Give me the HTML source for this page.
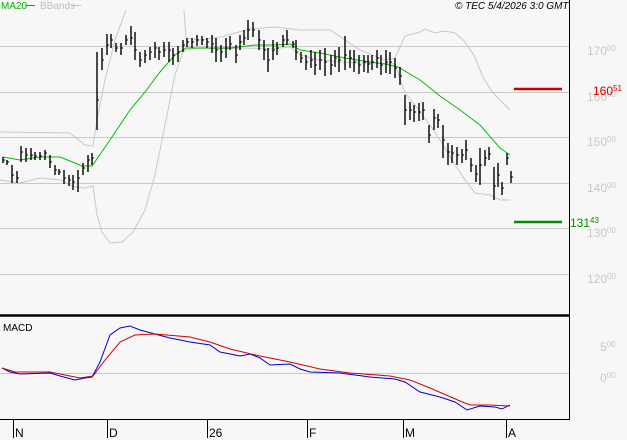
<!DOCTYPE html><html><head><style>
html,body{margin:0;padding:0;background:#f7f7f7;}
svg{display:block;font-family:"Liberation Sans",sans-serif;}
</style></head><body>
<svg width="627" height="440" viewBox="0 0 627 440">
<rect width="627" height="440" fill="#f7f7f7"/>
<g stroke="#c8c8c8" stroke-width="1">
<path d="M0 46.5H569M0 92.5H569M0 137.5H569M0 183.5H569M0 228.5H569M0 274.5H569M0 373.5H569"/>
</g>
<g fill="none" stroke="#c8c8c8" stroke-width="1">
<polyline points="0,132 70,133 85,145 93,146 97,120 105,80 115,40 126,10"/>
<polyline points="184,10 186,38 200,40 220,37 250,29 275,27 300,30 330,30 345,40 360,50 385,60 395,58 405,36 420,32 425,29 435,33 445,31 455,33 465,42 475,57 482,75 492,92 510,110"/>
<polyline points="0,180 20,183 40,178 60,180 75,187 85,188 93,186 97,215 102,232 110,243 122,242 133,232 145,210 155,175 165,125 175,75 183,52 186,50 200,48 220,49 245,48 270,49 290,47 300,55 320,60 340,62 360,63 380,63 395,64 405,93 415,105 430,125 440,140 450,157 465,180 475,193 490,195 500,200 510,200"/>
</g>
<polyline fill="none" stroke="#00c000" stroke-width="1" points="3,157 20,160 40,157 60,157 70,161 82,166 92,166 110,140 130,110 145,92 160,72 175,55 186,48 230,48 255,45 275,45 290,44 300,50 320,53 345,58 370,62 385,64 398,67 420,80 440,96 460,110 480,125 500,148 510,155"/>
<path stroke="#000" stroke-width="1.4" fill="none" d="M3 157V163M7 160V165M12 165V183M17 171V183M21 146V162M26 148V162M31 148V160M35 152V160M40 152V160M45 150V160M50 155V168M55 165V175M59 169V175M64 170V184M69 175V186M73 175V190M78 170V192M83 163V175M88 155V172M92 153V165M97 52V130M102 48V70M107 34V55M111 34V48M116 43V52M121 43V55M126 35V45M131 26V45M135 32V60M140 52V67M145 50V63M150 47V60M155 42V58M159 47V60M164 42V57M169 42V62M173 48V65M178 46V62M183 40V52M187 38V47M192 38V48M197 35V46M202 36V45M207 38V48M212 35V53M216 38V62M221 45V62M226 38V58M230 36V50M236 45V63M240 35V50M244 30V45M248 20V40M253 22V37M259 30V50M264 40V60M268 48V72M273 40V60M277 42V55M283 35V47M287 30V45M293 41V48M296 40V60M301 52V63M306 55V70M311 50V68M315 52V75M320 50V70M325 48V76M331 55V75M335 50V67M339 47V72M345 36V70M350 50V68M354 50V72M359 55V74M364 55V72M368 55V73M372 55V70M377 50V68M381 55V75M386 50V73M390 52V74M395 58V78M400 67V85M405 95V125M410 102V120M414 105V122M419 103V121M423 102V120M429 125V143M434 109V130M438 114V128M443 125V158M448 143V165M452 145V163M457 147V165M462 149V163M466 140V160M471 158V172M476 165V182M480 148V185M485 150V166M489 147V160M494 167V200M498 163V187M502 182V195M507 153V165M511 171V183"/>
<path stroke="#000" stroke-width="1" d="M3 160h2M7 162h2M12 175h2M17 178h2M21 152h2M26 155h2M31 155h2M35 156h2M40 156h2M45 153h2M50 162h2M55 170h2M59 172h2M64 178h2M69 180h2M73 182h2M78 178h2M83 168h2M88 160h2M92 158h2M97 100h2M102 60h2M107 45h2M111 40h2M116 48h2M121 48h2M126 40h2M131 38h2M135 50h2M140 60h2M145 55h2M150 52h2M155 48h2M159 52h2M164 50h2M169 50h2M173 55h2M178 52h2M183 45h2M187 42h2M192 42h2M197 40h2M202 40h2M207 42h2M212 44h2M216 50h2M221 52h2M226 48h2M230 44h2M236 55h2M240 42h2M244 38h2M248 30h2M253 30h2M259 40h2M264 50h2M268 60h2M273 50h2M277 48h2M283 40h2M287 40h2M293 44h2M296 52h2M301 58h2M306 62h2M311 60h2M315 65h2M320 60h2M325 62h2M331 65h2M335 58h2M339 60h2M345 55h2M350 58h2M354 62h2M359 65h2M364 62h2M368 64h2M372 62h2M377 58h2M381 65h2M386 62h2M390 62h2M395 68h2M400 76h2M405 110h2M410 110h2M414 112h2M419 112h2M423 110h2M429 135h2M434 118h2M438 120h2M443 140h2M448 152h2M452 153h2M457 155h2M462 155h2M466 150h2M471 165h2M476 174h2M480 165h2M485 158h2M489 154h2M494 186h2M498 175h2M502 188h2M507 158h2M511 177h2"/>
<path stroke="#c80000" stroke-width="2.5" d="M514 89H562"/>
<path stroke="#009000" stroke-width="2.5" d="M514 222H562"/>
<path stroke="#000" stroke-width="1" d="M569.5 0V420M0 419.5H570M13.5 420V438M107.5 420V438M207.5 420V438M307.5 420V438M403.5 420V438M506.5 420V438"/>
<path stroke="#000" stroke-width="2.5" d="M0 315.5H570"/>
<polyline fill="none" stroke="#0000d0" stroke-width="1" points="2,368 10,372 20,374 50,373 60,376 75,380 85,378 92,377 100,362 110,335 120,328 130,326 140,330 155,334 170,338 190,342 210,345 220,352 240,356 250,354 260,358 270,365 290,364 300,369 310,372 340,373 370,377 395,379 405,382 420,392 440,397 455,402 467,410 480,406 495,407 502,409 510,405"/>
<polyline fill="none" stroke="#d00000" stroke-width="1" points="2,368 15,372 50,372 70,376 80,378 93,376 105,360 120,342 135,335 155,334 190,337 210,342 230,349 260,356 290,362 320,369 350,373 390,376 410,380 430,388 460,401 470,405 490,405 510,406"/>
<g font-size="10">
<text x="1" y="9" fill="#00b000">MA20</text><path d="M26 5.5H35" stroke="#00b000"/>
<text x="40" y="9" fill="#c0c0c0">BBands</text><path d="M72 5.5H81" stroke="#c0c0c0"/>
<text x="455" y="9" fill="#000" font-style="italic">© TEC 5/4/2026 3:0 GMT</text>
<text x="3" y="331" fill="#000">MACD</text>
<g fill="#c8c8c8" font-size="12">
<text x="587" y="55">170<tspan font-size="8" dy="-4">00</tspan></text>
<text x="587" y="101">160<tspan font-size="8" dy="-4">00</tspan></text>
<text x="587" y="146">150<tspan font-size="8" dy="-4">00</tspan></text>
<text x="587" y="192">140<tspan font-size="8" dy="-4">00</tspan></text>
<text x="587" y="237">130<tspan font-size="8" dy="-4">00</tspan></text>
<text x="587" y="283">120<tspan font-size="8" dy="-4">00</tspan></text>
<text x="600" y="351">5<tspan font-size="8" dy="-4">00</tspan></text>
<text x="600" y="382">0<tspan font-size="8" dy="-4">00</tspan></text>
</g>
<text x="593" y="95" fill="#d00000" font-size="12">160<tspan font-size="8" dy="-4">51</tspan></text>
<text x="570" y="227" fill="#009000" font-size="12">131<tspan font-size="8" dy="-4">43</tspan></text>
<g font-size="12" fill="#000">
<text x="15" y="437">N</text><text x="109" y="437">D</text><text x="209" y="437">26</text><text x="309" y="437">F</text><text x="405" y="437">M</text><text x="508" y="437">A</text>
</g>
</g>
</svg>
</body></html>
